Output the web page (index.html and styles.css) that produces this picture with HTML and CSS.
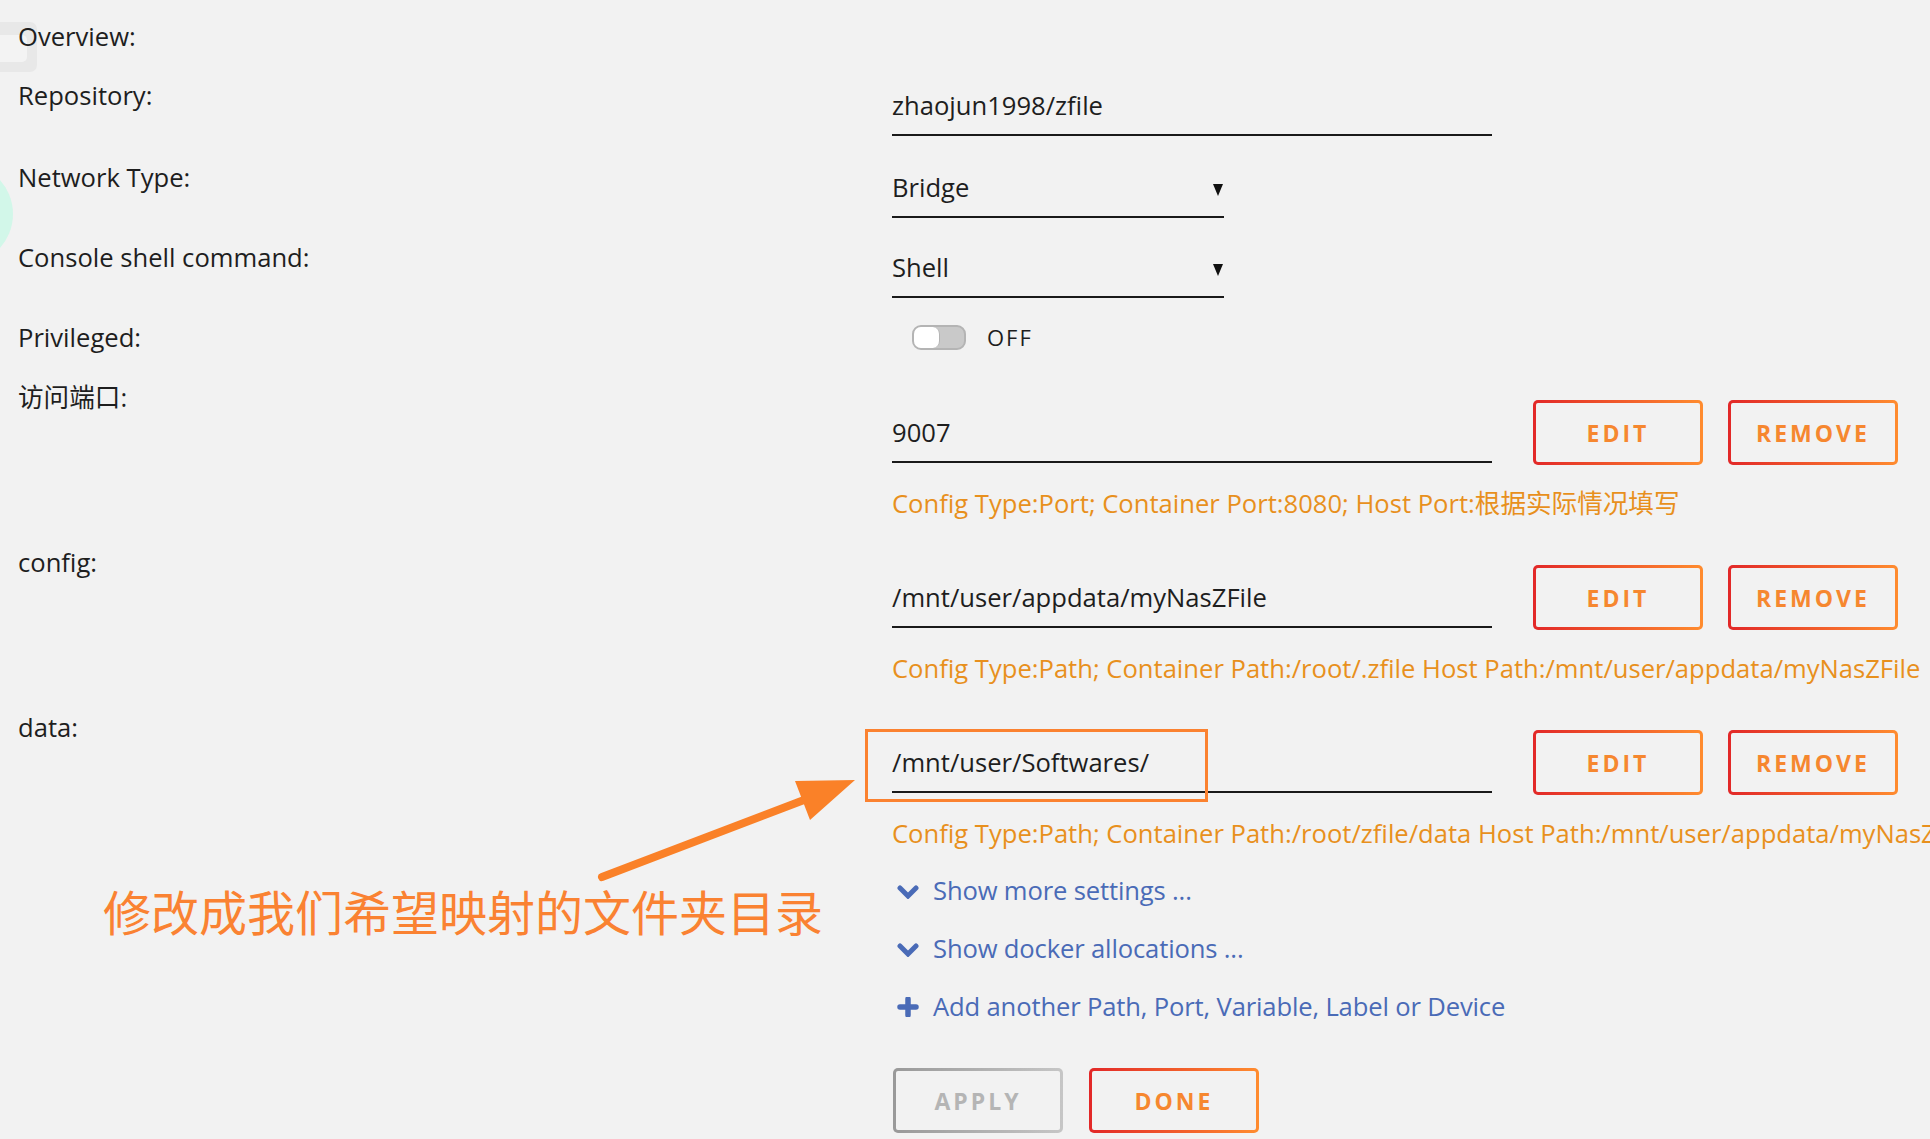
FILE: index.html
```html
<!DOCTYPE html>
<html lang="en">

<head>
    <meta charset="UTF-8">
    <meta name="viewport" content="width=device-width, initial-scale=1.0">
    <title>Update Container</title>
    <link rel="stylesheet" href="styles.css">
</head>

<body>
    <div class="page">
        <span class="dock-tab"><span></span></span>
        <span class="bubble"></span>

        <form class="form">
            <div class="row row-head">
                <div class="label">Overview:</div>
            </div>
            <div class="row row-simple row-repo">
                <div class="label">Repository:</div>
                <div class="value">
                    <div class="field wide">zhaojun1998/zfile</div>
                </div>
            </div>
            <div class="row row-simple">
                <div class="label">Network Type:</div>
                <div class="value">
                    <div class="field select">Bridge<span class="caret"></span></div>
                </div>
            </div>
            <div class="row row-simple">
                <div class="label">Console shell command:</div>
                <div class="value">
                    <div class="field select">Shell<span class="caret"></span></div>
                </div>
            </div>
            <div class="row row-switch">
                <div class="label">Privileged:</div>
                <div class="value">
                    <span class="switch"><span class="knob"></span></span>
                    <span class="switch-text">OFF</span>
                </div>
            </div>

            <div class="row entry">
                <div class="label">访问端口:</div>
                <div class="value">
                    <div class="entry-line">
                        <div class="field wide">9007</div>
                        <div class="actions">
                            <button type="button" class="btn">Edit</button>
                            <button type="button" class="btn">Remove</button>
                        </div>
                    </div>
                    <div class="hint">Config Type:Port; Container Port:8080; Host Port:根据实际情况填写</div>
                </div>
            </div>
            <div class="row entry">
                <div class="label">config:</div>
                <div class="value">
                    <div class="entry-line">
                        <div class="field wide">/mnt/user/appdata/myNasZFile</div>
                        <div class="actions">
                            <button type="button" class="btn">Edit</button>
                            <button type="button" class="btn">Remove</button>
                        </div>
                    </div>
                    <div class="hint">Config Type:Path; Container Path:/root/.zfile Host Path:/mnt/user/appdata/myNasZFile</div>
                </div>
            </div>
            <div class="row entry">
                <div class="label">data:</div>
                <div class="value">
                    <div class="entry-line">
                        <div class="field wide">/mnt/user/Softwares/</div>
                        <div class="actions">
                            <button type="button" class="btn">Edit</button>
                            <button type="button" class="btn">Remove</button>
                        </div>
                        <span class="mark"></span>
                    </div>
                    <div class="hint">Config Type:Path; Container Path:/root/zfile/data Host Path:/mnt/user/appdata/myNasZFile</div>
                </div>
            </div>

            <div class="tail">
                <div class="more">
                    <svg class="ico" width="22" height="14" viewBox="0 0 22 14">
                        <polyline points="3,3 11,11 19,3" fill="none" stroke="#4a6bb7" stroke-width="5" stroke-linecap="round" stroke-linejoin="miter" />
                    </svg>
                    <span>Show more settings ...</span>
                </div>
                <div class="more">
                    <svg class="ico" width="22" height="14" viewBox="0 0 22 14">
                        <polyline points="3,3 11,11 19,3" fill="none" stroke="#4a6bb7" stroke-width="5" stroke-linecap="round" stroke-linejoin="miter" />
                    </svg>
                    <span>Show docker allocations ...</span>
                </div>
                <div class="more">
                    <svg class="ico plus" width="22" height="20" viewBox="0 0 22 20">
                        <path d="M11 2 V18 M3 10 H19" fill="none" stroke="#4a6bb7" stroke-width="5.5" stroke-linecap="round" />
                    </svg>
                    <span>Add another Path, Port, Variable, Label or Device</span>
                </div>
                <div class="submit">
                    <button type="button" class="btn btn-off">Apply</button>
                    <button type="button" class="btn">Done</button>
                </div>
            </div>
        </form>

        <svg class="arrow" width="270" height="120" viewBox="0 0 270 120">
            <line x1="12" y1="107" x2="214" y2="30" stroke="#fa8128" stroke-width="8" stroke-linecap="round" />
            <polygon points="265,10 205,11 220,50" fill="#fa8128" />
        </svg>
        <div class="note">修改成我们希望映射的文件夹目录</div>
    </div>
</body>

</html>
```

FILE: styles.css
```css
body {
    margin: 0;
    background-color: #f2f2f2;
    color: #1e1e1e;
    font-family: "Open Sans", "Noto Sans CJK SC", sans-serif;
    font-size: 25.6px;
    overflow: hidden;
}

button {
    font-family: inherit;
}

.page {
    position: relative;
    height: 1139px;
    padding: 21px 0 0 18px;
    box-sizing: border-box;
}

/* bits of the floating widgets cut off at the left edge */
.dock-tab {
    position: absolute;
    left: 0;
    top: 22px;
    width: 37px;
    height: 50px;
    background-color: #e8e8e8;
    border-radius: 0 7px 7px 0;
}

.dock-tab span {
    position: absolute;
    left: 0;
    top: 13px;
    width: 27px;
    height: 27px;
    background-color: #f3f3f3;
    border-radius: 0 5px 5px 0;
}

.bubble {
    position: absolute;
    left: -89px;
    top: 163px;
    width: 102px;
    height: 102px;
    border-radius: 50%;
    background-color: #d2f7e9;
}

.form {
    position: relative;
}

.row {
    display: flex;
    align-items: flex-start;
}

.label {
    width: 874px;
    flex: none;
    line-height: 32px;
}

.row-head {
    margin-bottom: 27px;
}

.row-simple {
    margin-bottom: 24px;
}

.row-simple.row-repo {
    margin-bottom: 26px;
}

.row-simple .value {
    padding-top: 10px;
}

.field {
    box-sizing: border-box;
    line-height: 32px;
    padding-bottom: 12px;
    border-bottom: 2px solid #1a1a1a;
    white-space: nowrap;
}

.field.wide {
    width: 600px;
}

.field.select {
    width: 332px;
    display: flex;
    justify-content: space-between;
    align-items: center;
}

.caret {
    width: 0;
    height: 0;
    margin: 4px 1px 0 0;
    border-left: 5.5px solid transparent;
    border-right: 5.5px solid transparent;
    border-top: 12px solid #111;
}

.row-switch {
    margin-bottom: 25px;
}

.row-switch .value {
    display: flex;
    align-items: center;
    padding-top: 3px;
}

.switch {
    display: flex;
    width: 54px;
    height: 25px;
    margin-left: 20px;
    box-sizing: border-box;
    border: 2px solid #b4b4b4;
    border-radius: 9px;
    background-color: #c9c9c9;
}

.knob {
    width: 25px;
    height: 21px;
    background-color: #fff;
    border-right: 1px solid #b4b4b4;
    border-radius: 7px;
}

.switch-text {
    margin-left: 21px;
    font-size: 22px;
    line-height: 25px;
    letter-spacing: 2px;
}

.entry {
    margin-bottom: 24px;
}

.entry .label {
    padding-top: 3px;
}

.entry .value {
    padding-top: 21px;
}

.entry-line {
    position: relative;
    display: flex;
    align-items: flex-end;
}

.entry-line .field {
    margin-bottom: 2px;
}

.actions {
    display: flex;
    margin-left: 41px;
}

.actions .btn + .btn {
    margin-left: 25px;
}

.btn {
    width: 170px;
    height: 65px;
    box-sizing: border-box;
    border: 3px solid transparent;
    border-radius: 5px;
    background: linear-gradient(#f2f2f2, #f2f2f2) padding-box,
        linear-gradient(90deg, #e22828, #ff8c2f) border-box;
    color: #f6872f;
    font-size: 23px;
    font-weight: 700;
    letter-spacing: 3px;
    text-transform: uppercase;
    cursor: pointer;
    padding: 0;
}

.btn-off {
    background: linear-gradient(#f2f2f2, #f2f2f2) padding-box,
        linear-gradient(90deg, #999, #c6c6c6) border-box;
    color: #b5b5b5;
    cursor: default;
}

.hint {
    margin-top: 23px;
    line-height: 32px;
    color: #e8901d;
    white-space: nowrap;
}

.mark {
    position: absolute;
    left: -27px;
    top: -1px;
    width: 343px;
    height: 73px;
    box-sizing: border-box;
    border: 3px solid #fb8230;
}

.tail {
    margin-left: 874px;
    padding-top: 1px;
}

.more {
    display: flex;
    align-items: center;
    line-height: 32px;
    margin-bottom: 26px;
    color: #4a6bb7;
    letter-spacing: -0.15px;
}

.ico {
    margin: 2px 14px 0 5px;
    flex: none;
}

.ico.plus {
    margin-top: 0;
}

.submit {
    display: flex;
    margin-top: 45px;
    padding-left: 1px;
}

.submit .btn + .btn {
    margin-left: 26px;
}

.arrow {
    position: absolute;
    left: 590px;
    top: 770px;
}

.note {
    position: absolute;
    left: 103px;
    top: 886px;
    font-family: "Noto Sans CJK SC", sans-serif;
    font-size: 48px;
    line-height: 48px;
    color: #fa8232;
    white-space: nowrap;
}
```
